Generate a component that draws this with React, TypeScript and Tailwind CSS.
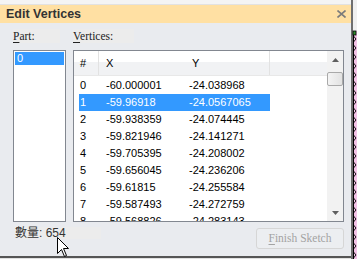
import React from "react";

const sans = { fontFamily: '"Liberation Sans", Arial, sans-serif' };
const serif = { fontFamily: '"Liberation Serif", "Times New Roman", serif' };
const cjk = { fontFamily: '"Liberation Sans", "Noto Sans CJK TC", sans-serif' };

const rows = [
  ["0", "-60.000001", "-24.038968"],
  ["1", "-59.96918", "-24.0567065"],
  ["2", "-59.938359", "-24.074445"],
  ["3", "-59.821946", "-24.141271"],
  ["4", "-59.705395", "-24.208002"],
  ["5", "-59.656045", "-24.236206"],
  ["6", "-59.61815", "-24.255584"],
  ["7", "-59.587493", "-24.272759"],
  ["8", "-59.568826", "-24.283143"],
];

function Strip() {
  const zig: string[] = [];
  for (let y = 36; y < 259; y += 9) {
    zig.push(`M2.5 ${y} L5 ${y + 3} L2.5 ${y + 6}`);
  }
  return (
    <svg width="6" height="259" viewBox="0 0 6 259" className="block">
      <rect x="0" y="0" width="6" height="259" fill="#f0f0f0" />
      <rect x="2" y="31" width="4" height="228" fill="#f4c3e7" />
      <rect x="0" y="0" width="2" height="259" fill="#6f6f6f" />
      <rect x="2" y="31" width="3" height="4" fill="#2f8a2f" stroke="#000" strokeWidth="0.8" />
      <line x1="2.5" y1="35" x2="2.5" y2="259" stroke="#000" strokeWidth="1" />
      {zig.map((d, i) => (
        <path key={i} d={d} stroke="#000" strokeWidth="0.9" fill="none" />
      ))}
    </svg>
  );
}

export default function App() {
  return (
    <div className="relative w-[357px] h-[259px] overflow-hidden bg-[#f2f2f2] flex">
      <div className="w-[351px] flex flex-col">
        <div className="h-[5px] bg-[#f4f4f4] border-b border-[#e2e2e2]" />
        <div className="h-[18px] bg-[#ffe0a3] flex items-center justify-between pl-[6px] pr-[5px]">
          <span className="font-bold text-[12.5px] leading-none text-[#333]" style={sans}>
            Edit Vertices
          </span>
          <svg width="9" height="8" viewBox="0 0 9 8">
            <path d="M0.5 0.5 L8.5 7.5 M8.5 0.5 L0.5 7.5" stroke="#7b7b7b" strokeWidth="1.6" />
          </svg>
        </div>
        <div className="flex-1 bg-[#e9ebef] pl-[13px] pr-[7px] pt-[6px] flex flex-col">
          <div className="h-[14px] flex gap-[13px]">
            <div className="w-[47px] bg-[#ececec] text-[11.5px] leading-[14px] text-[#222]" style={serif}>
              <span className="underline underline-offset-2">P</span>art:
            </div>
            <div className="w-[61px] bg-[#ececec] text-[11.5px] leading-[14px] text-[#222]" style={serif}>
              <span className="underline underline-offset-2">V</span>ertices:
            </div>
          </div>
          <div className="mt-[7px] h-[172px] flex gap-[7px]">
            <div className="w-[53px] border border-[#828790] bg-white p-[1px]">
              <div className="h-[13px] bg-[#3399ff] text-white text-[11px] leading-[13px] pl-[2px]" style={sans}>
                0
              </div>
            </div>
            <div className="w-[271px] border border-[#828790] bg-white flex overflow-hidden">
              <div className="flex-1 flex flex-col overflow-hidden text-[11px] text-black" style={sans}>
                <div className="h-[25px] flex shrink-0 border-b border-[#e8e8e8] bg-[linear-gradient(#ffffff_0%,#ffffff_45%,#f1f2f4_46%,#f1f2f4_100%)]">
                  <div className="w-[25px] pl-[6px] leading-[25px] border-r border-[#e2e2e2]">#</div>
                  <div className="w-[85px] pl-[7px] leading-[25px]">X</div>
                  <div className="w-[86px] pl-[8px] leading-[25px] border-r border-[#e2e2e2]">Y</div>
                  <div className="flex-1" />
                </div>
                <div className="mt-[1px] flex flex-col">
                  {rows.map((r, i) => (
                    <div key={i} className="h-[17px] shrink-0 flex">
                      <div
                        className={
                          "ml-[5px] w-[191px] flex leading-[17px] " +
                          (i === 1 ? "bg-[#3399ff] text-white" : "")
                        }
                      >
                        <div className="w-[20px] pl-[1px]">{r[0]}</div>
                        <div className="w-[85px] pl-[7px]">{r[1]}</div>
                        <div className="w-[86px] pl-[5px]">{r[2]}</div>
                      </div>
                    </div>
                  ))}
                </div>
              </div>
              <div className="w-[16px] bg-[#f2f2f2] flex flex-col shrink-0">
                <div className="h-[17px] flex items-center justify-center">
                  <svg width="7" height="4" viewBox="0 0 7 4">
                    <path d="M0 4 L3.5 0 L7 4 Z" fill="#5f5f5f" />
                  </svg>
                </div>
                <div className="mt-[4px] h-[14px] border border-[#a9a9a9] rounded-[2px] bg-[linear-gradient(90deg,#f4f4f4,#e2e2e2)]" />
                <div className="flex-1" />
                <div className="h-[17px] flex items-center justify-center">
                  <svg width="7" height="4" viewBox="0 0 7 4">
                    <path d="M0 0 L3.5 4 L7 0 Z" fill="#5f5f5f" />
                  </svg>
                </div>
              </div>
            </div>
          </div>
          <div className="mt-[5px] flex justify-between items-start">
            <div className="ml-[2px] w-[86px] h-[12px] bg-[#ececec] text-[12px] leading-[12px] text-[#333]" style={cjk}>
              數量: 654
            </div>
            <div
              className="mt-[1px] w-[88px] h-[21px] border border-[#d6d6d6] rounded-[3px] bg-[#eceef1] text-[#a3a3a3] text-[11.5px] flex items-center justify-center"
              style={serif}
            >
              <span>
                <span className="underline underline-offset-2">F</span>inish Sketch
              </span>
            </div>
          </div>
        </div>
        <div className="h-[2px] bg-[#555]" />
        <div className="h-[1px] bg-[#e0e0e0]" />
      </div>
      <Strip />
      <svg
        className="absolute left-[57px] top-[237px]"
        width="13"
        height="21"
        viewBox="0 0 13 21"
      >
        <path
          d="M0.5 0.5 L0.5 16.5 L4.5 12.5 L7.5 19.5 L9.5 18.5 L6.5 11.5 L11.5 11.5 Z"
          fill="#fff"
          stroke="#000"
          strokeWidth="1"
          strokeLinejoin="miter"
        />
      </svg>
    </div>
  );
}
